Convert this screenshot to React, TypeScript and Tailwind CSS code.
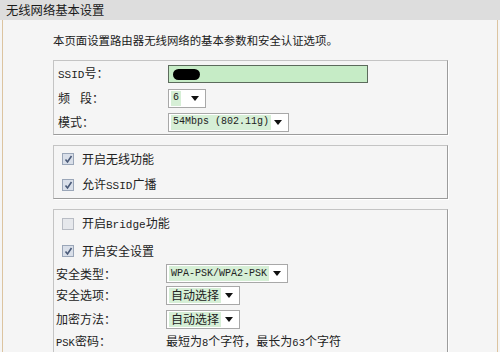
const cjk = "font-['Noto_Sans_CJK_SC',sans-serif]";
const mono = "font-['Liberation_Mono','Noto_Sans_CJK_SC',monospace]";

const Arrow = () => (
  <svg width="8" height="5" viewBox="0 0 8 5" className="shrink-0">
    <path d="M0 0H8L4 5Z" fill="#111" />
  </svg>
);

const Select = ({ value, width, latin }: { value: string; width: string; latin?: boolean }) => (
  <div className={`flex h-[19px] items-center border border-[#a8a8a8] bg-white pl-[2px] pr-[6px] ${width}`}>
    <span
      className={`flex h-[15px] items-center whitespace-nowrap bg-[#d6efd6] px-[2px] leading-none text-[#222] ${
        latin ? `${mono} text-[10px]` : `${cjk} text-[12px]`
      }`}
    >
      {value}
    </span>
    <div className="flex-1" />
    <Arrow />
  </div>
);

const Check = ({ checked }: { checked: boolean }) => (
  <div
    className={`flex h-[12px] w-[12px] items-center justify-center border ${
      checked ? 'border-[#9aa6b8] bg-[#d9dfe9]' : 'border-[#b8bcc4] bg-[#e6e8ec]'
    }`}
  >
    {checked && (
      <svg width="9" height="9" viewBox="0 0 9 9">
        <path d="M1.5 4.5L3.5 7L7.5 1" fill="none" stroke="#4a5a78" strokeWidth="1.6" />
      </svg>
    )}
  </div>
);

const Row = ({ label, h, children }: { label: React.ReactNode; h: string; children: React.ReactNode }) => (
  <div className={`flex items-center ${h}`}>
    <div className="w-[110px] shrink-0 whitespace-nowrap text-[12px] text-[#222]">{label}</div>
    {children}
  </div>
);

const CheckRow = ({ checked, h, children }: { checked: boolean; h: string; children: React.ReactNode }) => (
  <div className={`flex items-center pl-[8px] ${h}`}>
    <Check checked={checked} />
    <span className="ml-[8px] whitespace-nowrap text-[12px] text-[#222]">{children}</span>
  </div>
);

const groupBox =
  'w-[395px] border border-t-[#c4c4c4] border-l-[#c4c4c4] border-b-[#9c9c9c] border-r-[#9c9c9c] shadow-[1px_1px_0_#fff]';

export default function App() {
  return (
    <div className={`h-[352px] w-[500px] overflow-hidden bg-[#f5f5f5] ${cjk}`}>
      <div className="h-[20px] bg-[#dddddd] pl-[6px] text-[12.3px] leading-[20px] text-[#1a1a1a]">
        无线网络基本设置
      </div>
      <div className="mx-[2px] h-[332px] border-x border-[#dcc4a0] pl-[50px]">
        <div className="pt-[12px] text-[11.4px] leading-[16px] text-[#1a1a1a]">
          本页面设置路由器无线网络的基本参数和安全认证选项。
        </div>

        <div className={`mt-[12px] pt-[1px] pl-[4px] ${groupBox}`}>
          <Row h="h-[24px]" label={<><span className={`${mono} text-[11px]`}>SSID</span>号：</>}>
            <div className="flex h-[18px] w-[200px] items-center border border-[#5c6b5c] bg-[#c6ecc6] pl-[4px]">
              <span className="h-[11px] w-[27px] rounded-full bg-black" />
            </div>
          </Row>
          <Row h="h-[24px]" label={<>频<span className="ml-[10px]">段：</span></>}>
            <Select value="6" width="w-[38px]" latin />
          </Row>
          <Row h="h-[24px]" label="模式：">
            <Select value="54Mbps (802.11g)" width="w-[121px]" latin />
          </Row>
        </div>

        <div className={`mt-[10px] ${groupBox}`}>
          <CheckRow checked h="h-[26px]">
            开启无线功能
          </CheckRow>
          <CheckRow checked h="h-[26px]">
            允许<span className={`${mono} text-[11px]`}>SSID</span>广播
          </CheckRow>
        </div>

        <div className={`mt-[10px] h-[200px] pl-[2px] ${groupBox}`}>
          <CheckRow checked={false} h="h-[28px] -ml-[2px]">
            开启<span className={`${mono} text-[11px]`}>Bridge</span>功能
          </CheckRow>
          <CheckRow checked h="h-[26px] -ml-[2px]">
            开启安全设置
          </CheckRow>
          <Row h="h-[19px]" label="安全类型：">
            <Select value="WPA-PSK/WPA2-PSK" width="w-[122px]" latin />
          </Row>
          <Row h="h-[24px]" label="安全选项：">
            <Select value="自动选择" width="w-[74px]" />
          </Row>
          <Row h="h-[24px]" label="加密方法：">
            <Select value="自动选择" width="w-[74px]" />
          </Row>
          <Row h="h-[22px]" label={<><span className={`${mono} text-[10.5px]`}>PSK</span>密码：</>}>
            <span className="whitespace-nowrap text-[12px] text-[#222]">
              最短为<span className={`${mono} text-[10.5px]`}>8</span>个字符，最长为
              <span className={`${mono} text-[10.5px]`}>63</span>个字符
            </span>
          </Row>
        </div>
      </div>
    </div>
  );
}
